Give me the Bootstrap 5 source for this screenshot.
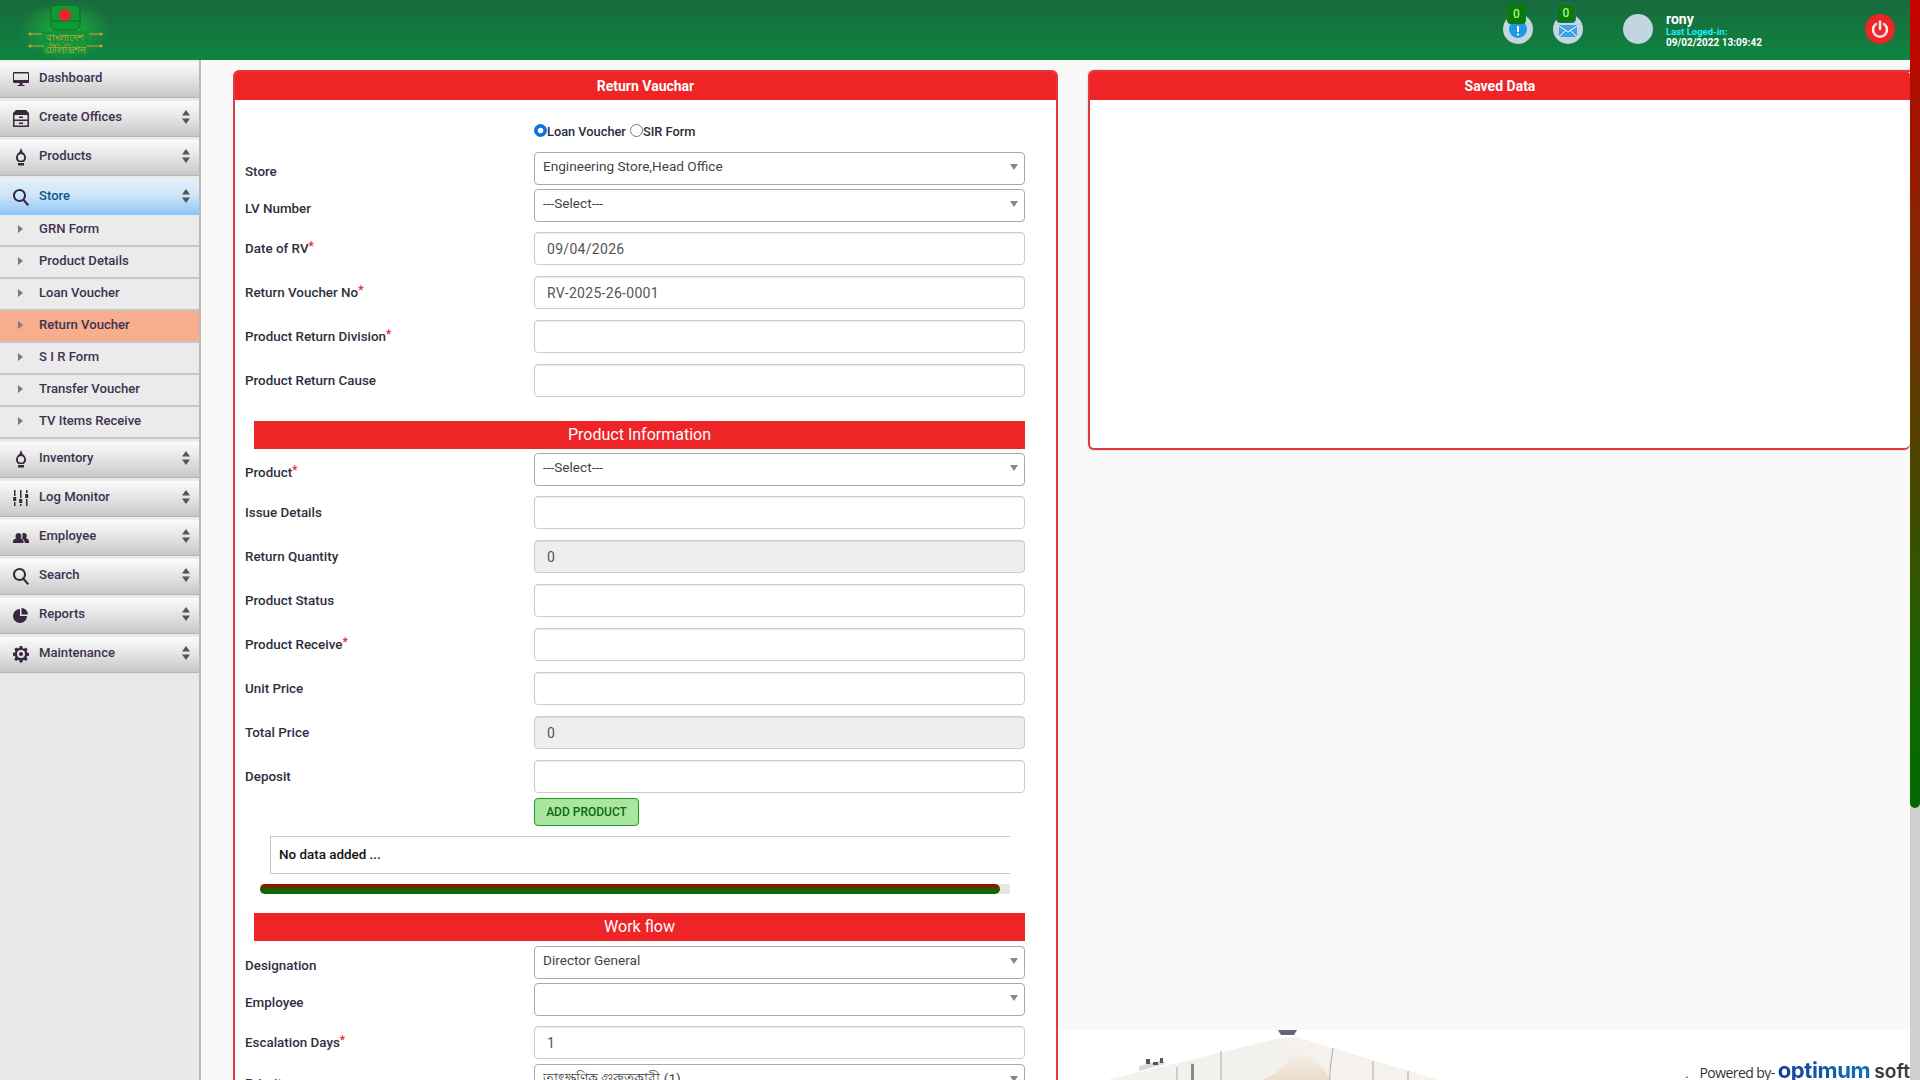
<!DOCTYPE html>
<html lang="en">
<head>
<meta charset="utf-8">
<title>Return Vauchar</title>
<link href="https://cdn.jsdelivr.net/npm/bootstrap@5.3.0/dist/css/bootstrap.min.css" rel="stylesheet">
<style>
html,body{height:100%;overflow:hidden}
body{font-family:Roboto,"Noto Sans",sans-serif;font-size:14px;color:#2d2d3a;background:#f9f9f9}
.app-shell{height:1080px;width:1920px}
.app-page{width:1910px;height:1080px;overflow:hidden}
.app-lower{min-height:0}
.fake-track{width:10px;height:1080px;background:#cfcfcf}
.fake-thumb{height:808px;border-radius:0 0 6px 6px;background:linear-gradient(#cc0000 0,#a31500 15%,#0b6a00 90%,#006a00 100%)}
.top-bar{height:60px;background:linear-gradient(#186a3c,#0f8440);color:#fff;flex:none}
.logo-zone{width:130px;height:60px}
.top-tools{margin-top:-3px}
.round-ic{width:30px;height:30px;border-radius:50%;background:#c2d6e0;position:relative}
.round-gap{margin-right:20px}
.round-face{margin-left:40px}
.bub{position:absolute;top:-10px;left:4px;width:19px;height:20px;background:#0b7a0b;color:#a5f08c;font-size:12px;font-weight:500;border-radius:4px;line-height:20px;text-align:center}
.bub-mail{left:3px;width:20px;top:-11px;border:1px solid #1f6a8a;line-height:18px}
.mail-ic{margin-top:5px}
.who{margin-left:13px;line-height:1;font-weight:700;width:199px}
.who-name{font-size:14px;line-height:14px;padding-top:2px;margin-bottom:1px;font-weight:700}
.who-last{font-size:9.5px;color:#19f0ff;line-height:9px}
.who-date{font-size:10px;line-height:11px;padding-top:1px}
.power{width:30px;height:30px;border-radius:50%;background:#ee2427;margin-right:15px}
.side-col{width:201px;background:#e9e9e9;border-right:2px solid #b9b9b9;flex:none;padding-top:1px}
.side-link{height:37px;margin-bottom:2px;padding:0 9px 3px 13px;color:#3c3350;background:linear-gradient(#fbfbfb,#e6e6e6 45%,#c8c8c8);border-top:1px solid #eee;border-bottom:1px solid #b5b5b5;font-size:13.1px;font-weight:500;text-decoration:none}
.side-link.is-open{background:linear-gradient(#e2effb,#cfe5f9 45%,#8cc4f5);color:#0f5a86;margin-bottom:0;border-bottom:0}
.side-ic{width:16px;height:18px;margin-right:10px;margin-top:2px;flex:none;fill:#39263f}
.updown{width:8px;height:14px;margin-left:auto;flex:none;fill:#555}
.sub-link{height:32px;padding:0 0 2px 18px;background:#ebebeb;border-bottom:2px solid #c6c6c6;color:#3c3350;font-size:13.1px;font-weight:500;text-decoration:none}
.sub-link.is-here{background:#f8ae8c;border-bottom-color:#c6c6c6}
.sub-arrow{width:5px;height:8px;margin-right:16px;fill:#7a7a7a;flex:none}
.side-sub-end{margin-bottom:2px}
.content-zone{padding-left:32px;min-width:0;overflow:hidden}
.form-side{width:825px;padding-top:10px;flex:none}
.red-card{border:2px solid #e0393e;border-radius:6px 6px 0 0}
.red-head{background:#ee2427;color:#fff;height:28px;line-height:29px;padding:0;text-align:center;font-weight:700;font-size:14px;border:0;border-radius:3px 3px 0 0!important}
.rv-body{padding:0 31px 40px 10px}
.rv-radio{margin-left:289px;height:52px;padding-top:22px;font-weight:500;font-size:12.8px}
.rv-radio .form-check-input{width:13px;height:13px;margin:0;border-color:#777;vertical-align:-1px;float:none;border-width:1px}
.rv-radio .form-check-input:checked{background-color:#0d74dc;border-color:#0d74dc}
.rv-radio label{margin-right:4px}
.rv-line{display:flex;margin-bottom:11px}
.rv-line.tight{margin-bottom:4px}
.rv-line.loose{margin-bottom:10px}
.rv-line.step{margin-bottom:5px}
.rv-name{width:289px;height:33px;flex:none;font-weight:500;font-size:13.4px;color:#2f2f3f;line-height:33px;margin:0}
.rv-name.low{padding-top:3px}
.rv-name i{color:#ee2427;font-style:normal;font-size:12px;vertical-align:3px;line-height:0}
.rv-field{height:33px;border:1px solid #ccc;border-radius:4px;padding:0 12px;font-size:14px;color:#555;letter-spacing:.3px;box-shadow:inset 0 1px 1px rgba(0,0,0,.08)}
.rv-field:disabled{background:#eee;opacity:1}
.rv-pick{height:33px;border:1px solid #a9a9a9;border-radius:4px;padding:0 24px 5px 8px;font-size:13.6px;color:#444;background-size:8px 6px;background-position:right 6px top 11px;background-image:url("data:image/svg+xml,%3Csvg xmlns='http://www.w3.org/2000/svg' viewBox='0 0 8 6'%3E%3Cpath fill='%23888' d='M0 0h8L4 6z'/%3E%3C/svg%3E");background-repeat:no-repeat;background-color:#fff;font-weight:400}
.rv-band{margin:0 0 4px 9px;height:28px;line-height:28px;background:#ee2427;color:#fff;text-align:center;font-size:16px;font-weight:400}
.rv-band.first{margin-top:24px}
.rv-band.later{margin-bottom:5px}
.rv-add{margin:-6px 0 10px 289px;height:28px;width:105px;padding:0;background:#a9e6a0;border:1px solid #1c9a1c;border-radius:4px;color:#0c6a0c;font-size:12px;font-weight:500;text-transform:uppercase;display:block}
.rv-empty{margin:0 15px 10px 25px;height:38px;line-height:36px;padding-left:8px;border:1px solid #c6c6c6;border-right:0;color:#111;font-weight:500;font-size:13.4px;background:#fff}
.rv-progress{margin:0 15px 19px 15px;height:10px;background:#e6e6e6;border-radius:0}
.rv-progress-fill{height:10px;width:740px;border-radius:5px;background:linear-gradient(#b00000,#0a6a00 65%)}
.right-side{padding-top:10px;padding-left:30px;min-width:0}
.saved-card{border:2px solid #e0393e;border-right:0;height:380px;border-radius:6px 0 6px 6px;box-shadow:0 0 2px rgba(220,50,50,.4)}
.foot-strip{height:50px;margin-left:-28px;background:#fff;position:relative;overflow:hidden}
.foot-art{position:absolute;left:0;top:0;width:850px;height:50px}
.foot-credit{position:relative;line-height:1;font-family:"Open Sans",sans-serif;color:#333;white-space:nowrap;margin-bottom:-1px}
.dot-text{font-size:12px;margin-right:11px}
.by-text{font-size:14px;letter-spacing:-.55px;margin-right:3px}
.op-text{font-family:Inter,sans-serif;font-size:22px;font-weight:700;letter-spacing:-.4px;background:linear-gradient(90deg,#1a3aa0,#0e72b8);-webkit-background-clip:text;background-clip:text;color:transparent}
.sf-text{font-family:Inter,sans-serif;font-size:19px;font-weight:600;color:#3a3a3a;margin-left:4px;letter-spacing:.1px}
</style>
</head>
<body>
<div class="app-shell d-flex">
 <div class="app-page d-flex flex-column">
  <header class="top-bar d-flex align-items-center">
   <div class="logo-zone">
    <svg width="130" height="60" viewBox="0 0 130 60">
     <defs><radialGradient id="glow"><stop offset="0" stop-color="#22b33a"/><stop offset="1" stop-color="#22b33a" stop-opacity="0"/></radialGradient></defs>
     <ellipse cx="65" cy="30" rx="46" ry="30" fill="url(#glow)"/>
     <rect x="51" y="5" width="29" height="25" rx="5" fill="#109a35" stroke="#0c6b2e"/>
     <path d="M51 21h29" stroke="#0c6b2e"/>
     <circle cx="65" cy="15" r="6" fill="#ee2427"/>
     <path d="M30 34h71M30 46h71" stroke="#c9a23a" stroke-width="1"/>
     <circle cx="30" cy="34" r="1.5" fill="#c9a23a"/><circle cx="101" cy="34" r="1.5" fill="#c9a23a"/><circle cx="30" cy="46" r="1.5" fill="#c9a23a"/><circle cx="101" cy="46" r="1.5" fill="#c9a23a"/>
     <rect x="42" y="31" width="47" height="11" fill="#12933a"/><rect x="44" y="43" width="43" height="11" fill="#14983a"/>
     <text x="65" y="41" text-anchor="middle" font-size="10" fill="#d3a83c" font-family="'Noto Sans',sans-serif">বাংলাদেশ</text>
     <text x="65" y="53" text-anchor="middle" font-size="10" fill="#d3a83c" font-family="'Noto Sans',sans-serif">টেলিভিশন</text>
    </svg>
   </div>
   <div class="ms-auto d-flex align-items-center top-tools">
    <div class="round-ic round-gap d-flex align-items-center justify-content-center">
     <span class="bub">0</span>
     <svg width="18" height="18" viewBox="0 0 18 18"><circle cx="9" cy="9" r="9" fill="#1f97e6"/><path d="M8 6h2v6H8zM8 13.500h2v2H8z" fill="#fff"/></svg>
    </div>
    <div class="round-ic d-flex align-items-center justify-content-center">
     <span class="bub bub-mail">0</span>
     <svg class="mail-ic" width="18" height="12" viewBox="0 0 18 12"><rect width="18" height="12" rx="1" fill="#3ea2e6"/><path d="M0 1l9 6 9-6M0 12l6-6M18 12l-6-6" fill="none" stroke="#fff" stroke-width="1"/></svg>
    </div>
    <div class="round-ic round-face"></div>
    <div class="who">
     <div class="who-name">rony</div>
     <div class="who-last">Last Loged-in:</div>
     <div class="who-date">09/02/2022 13:09:42</div>
    </div>
    <div class="power d-flex align-items-center justify-content-center">
     <svg width="20" height="20" viewBox="0 0 20 20" fill="none" stroke="#e9e4e4" stroke-width="2.6" stroke-linecap="round"><path d="M6 5a7 7 0 1 0 8 0"/><path d="M10 2.500v7.500"/></svg>
    </div>
   </div>
  </header>
  <div class="d-flex flex-grow-1 app-lower">
   <nav class="side-col nav flex-column flex-nowrap">
    <a class="side-link d-flex align-items-center" href="#"><svg class="side-ic" viewBox="0 0 16 18"><path d="M1 2h14a1 1 0 0 1 1 1v9a1 1 0 0 1-1 1H1a1 1 0 0 1-1-1V3a1 1 0 0 1 1-1zm0 1.500V10h14V3.500zM6.500 13h3v2h2v1h-7v-1h2z"/></svg>Dashboard</a>
    <a class="side-link d-flex align-items-center" href="#"><svg class="side-ic" viewBox="0 0 16 18"><path d="M3 1h10l3 3v14H0V4zM1.500 6v4.500h13V6zm0 6v4.500h13V12zM6 7.500h4V9H6zm0 6h4V15H6z" fill-rule="evenodd"/></svg>Create Offices<svg class="updown" viewBox="0 0 8 14"><path d="M4 0l4 5.500H0zM4 14l4-5.500H0z"/></svg></a>
    <a class="side-link d-flex align-items-center" href="#"><svg class="side-ic" viewBox="0 0 16 18"><path d="M8 0l1.600 4C12 5.500 13 8 13 10c0 1.800-1 3-2.500 4h-5C4 13 3 11.800 3 10c0-2 1-4.500 3.400-6zM8 6a3.500 3.500 0 0 0-3 4c0 1 .5 2 1.500 2.500h3C10.500 12 11 11 11 10a3.500 3.500 0 0 0-3-4zM5 15h6v2.500H5z" fill-rule="evenodd"/></svg>Products<svg class="updown" viewBox="0 0 8 14"><path d="M4 0l4 5.500H0zM4 14l4-5.500H0z"/></svg></a>
    <a class="side-link is-open d-flex align-items-center" href="#"><svg class="side-ic" viewBox="0 0 16 18"><path d="M6.500 1a6.500 6.500 0 0 1 5.100 10.500l4.400 5-1.500 1.400-4.400-5A6.500 6.500 0 1 1 6.500 1zm0 2a4.500 4.500 0 1 0 0 9 4.500 4.500 0 0 0 0-9z" fill-rule="evenodd"/></svg>Store<svg class="updown" viewBox="0 0 8 14"><path d="M4 0l4 5.500H0zM4 14l4-5.500H0z"/></svg></a>
    <a class="sub-link d-flex align-items-center" href="#"><svg class="sub-arrow" viewBox="0 0 5 8"><path d="M0 0l5 4-5 4z"/></svg>GRN Form</a>
    <a class="sub-link d-flex align-items-center" href="#"><svg class="sub-arrow" viewBox="0 0 5 8"><path d="M0 0l5 4-5 4z"/></svg>Product Details</a>
    <a class="sub-link d-flex align-items-center" href="#"><svg class="sub-arrow" viewBox="0 0 5 8"><path d="M0 0l5 4-5 4z"/></svg>Loan Voucher</a>
    <a class="sub-link is-here d-flex align-items-center" href="#"><svg class="sub-arrow" viewBox="0 0 5 8"><path d="M0 0l5 4-5 4z"/></svg>Return Voucher</a>
    <a class="sub-link d-flex align-items-center" href="#"><svg class="sub-arrow" viewBox="0 0 5 8"><path d="M0 0l5 4-5 4z"/></svg>S I R Form</a>
    <a class="sub-link d-flex align-items-center" href="#"><svg class="sub-arrow" viewBox="0 0 5 8"><path d="M0 0l5 4-5 4z"/></svg>Transfer Voucher</a>
    <a class="sub-link side-sub-end d-flex align-items-center" href="#"><svg class="sub-arrow" viewBox="0 0 5 8"><path d="M0 0l5 4-5 4z"/></svg>TV Items Receive</a>
    <a class="side-link d-flex align-items-center" href="#"><svg class="side-ic" viewBox="0 0 16 18"><path d="M8 0l1.600 4C12 5.500 13 8 13 10c0 1.800-1 3-2.500 4h-5C4 13 3 11.800 3 10c0-2 1-4.500 3.400-6zM8 6a3.500 3.500 0 0 0-3 4c0 1 .5 2 1.500 2.500h3C10.500 12 11 11 11 10a3.500 3.500 0 0 0-3-4zM5 15h6v2.500H5z" fill-rule="evenodd"/></svg>Inventory<svg class="updown" viewBox="0 0 8 14"><path d="M4 0l4 5.500H0zM4 14l4-5.500H0z"/></svg></a>
    <a class="side-link d-flex align-items-center" href="#"><svg class="side-ic" viewBox="0 0 16 18"><path d="M1 1h1.500v6H1zM.2 8h3v4h-3zM1 13h1.500v4H1zM7 1h1.500v8H7zM6.200 10h3v4h-3zM7 15h1.500v2H7zM13 1h1.500v3H13zM12.200 5h3v4h-3zM13 10h1.500v7H13z"/></svg>Log Monitor<svg class="updown" viewBox="0 0 8 14"><path d="M4 0l4 5.500H0zM4 14l4-5.500H0z"/></svg></a>
    <a class="side-link d-flex align-items-center" href="#"><svg class="side-ic" viewBox="0 0 16 18"><path d="M5.500 5a3 3 0 0 1 2 5.200c1.600.6 3 1.500 3 3.300V15H0v-1.500c0-1.800 1.500-2.700 3.400-3.300A3 3 0 0 1 5.500 5zM11 5a2.800 2.800 0 0 1 1.800 5c1.600.6 3.200 1.400 3.200 3.500V15h-4.200c0-2-1-3.500-2.800-4.700a4.200 4.200 0 0 0 .1-4.600A3 3 0 0 1 11 5z"/></svg>Employee<svg class="updown" viewBox="0 0 8 14"><path d="M4 0l4 5.500H0zM4 14l4-5.500H0z"/></svg></a>
    <a class="side-link d-flex align-items-center" href="#"><svg class="side-ic" viewBox="0 0 16 18"><path d="M6.500 1a6.500 6.500 0 0 1 5.100 10.500l4.400 5-1.500 1.400-4.400-5A6.500 6.500 0 1 1 6.500 1zm0 2a4.500 4.500 0 1 0 0 9 4.500 4.500 0 0 0 0-9z" fill-rule="evenodd"/></svg>Search<svg class="updown" viewBox="0 0 8 14"><path d="M4 0l4 5.500H0zM4 14l4-5.500H0z"/></svg></a>
    <a class="side-link d-flex align-items-center" href="#"><svg class="side-ic" viewBox="0 0 16 18"><path d="M7 3a7 7 0 1 0 7 7H7zM8.500 2v6.500H15A6.500 6.500 0 0 0 8.500 2z"/></svg>Reports<svg class="updown" viewBox="0 0 8 14"><path d="M4 0l4 5.500H0zM4 14l4-5.500H0z"/></svg></a>
    <a class="side-link d-flex align-items-center" href="#"><svg class="side-ic" viewBox="0 0 16 18"><path d="M6.700 1h2.600l.4 2.200 1.300.6 1.900-1.200 1.800 1.800-1.200 1.900.6 1.300 2.200.4v2.600l-2.200.4-.6 1.300 1.200 1.900-1.800 1.800-1.900-1.200-1.300.6-.4 2.100H6.700l-.4-2.100-1.300-.6-1.900 1.200-1.800-1.800 1.200-1.900-.6-1.300-2.200-.4V7.800l2.200-.4.600-1.300-1.200-1.900 1.800-1.800 1.900 1.200 1.300-.6zM8 5a4 4 0 1 0 0 8 4 4 0 0 0 0-8zm0 2a2 2 0 1 1 0 4 2 2 0 0 1 0-4z" fill-rule="evenodd"/></svg>Maintenance<svg class="updown" viewBox="0 0 8 14"><path d="M4 0l4 5.500H0zM4 14l4-5.500H0z"/></svg></a>
   </nav>
   <main class="content-zone d-flex flex-grow-1">
    <section class="form-side">
     <div class="card red-card">
      <div class="card-header red-head">Return Vauchar</div>
      <form class="rv-body">
       <div class="rv-radio"><input class="form-check-input" type="radio" name="vt" id="r1" checked><label for="r1">Loan Voucher</label><input class="form-check-input" type="radio" name="vt" id="r2"><label for="r2">SIR Form</label></div>
       <div class="rv-line tight"><label class="rv-name low">Store</label><select class="form-select rv-pick"><option>Engineering Store,Head Office</option></select></div>
       <div class="rv-line loose"><label class="rv-name low">LV Number</label><select class="form-select rv-pick"><option>---Select---</option></select></div>
       <div class="rv-line"><label class="rv-name">Date of RV<i>*</i></label><input class="form-control rv-field" value="09/04/2026"></div>
       <div class="rv-line"><label class="rv-name">Return Voucher No<i>*</i></label><input class="form-control rv-field" value="RV-2025-26-0001"></div>
       <div class="rv-line"><label class="rv-name">Product Return Division<i>*</i></label><input class="form-control rv-field"></div>
       <div class="rv-line"><label class="rv-name">Product Return Cause</label><input class="form-control rv-field"></div>
       <div class="rv-band first">Product Information</div>
       <div class="rv-line loose"><label class="rv-name low">Product<i>*</i></label><select class="form-select rv-pick"><option>---Select---</option></select></div>
       <div class="rv-line"><label class="rv-name">Issue Details</label><input class="form-control rv-field"></div>
       <div class="rv-line"><label class="rv-name">Return Quantity</label><input class="form-control rv-field" value="0" disabled></div>
       <div class="rv-line"><label class="rv-name">Product Status</label><input class="form-control rv-field"></div>
       <div class="rv-line"><label class="rv-name">Product Receive<i>*</i></label><input class="form-control rv-field"></div>
       <div class="rv-line"><label class="rv-name">Unit Price</label><input class="form-control rv-field"></div>
       <div class="rv-line"><label class="rv-name">Total Price</label><input class="form-control rv-field" value="0" disabled></div>
       <div class="rv-line"><label class="rv-name">Deposit</label><input class="form-control rv-field"></div>
       <button type="button" class="btn rv-add">Add Product</button>
       <div class="rv-empty">No data added ...</div>
       <div class="rv-progress"><div class="rv-progress-fill"></div></div>
       <div class="rv-band later">Work flow</div>
       <div class="rv-line tight"><label class="rv-name low">Designation</label><select class="form-select rv-pick"><option>Director General</option></select></div>
       <div class="rv-line loose"><label class="rv-name low">Employee</label><select class="form-select rv-pick"><option></option></select></div>
       <div class="rv-line step"><label class="rv-name">Escalation Days<i>*</i></label><input class="form-control rv-field" value="1"></div>
       <div class="rv-line"><label class="rv-name low">Priority</label><select class="form-select rv-pick"><option>তাৎক্ষণিক গুরুত্বকারী (1)</option></select></div>
      </form>
     </div>
    </section>
    <aside class="right-side d-flex flex-column flex-grow-1">
     <div class="card saved-card">
      <div class="card-header red-head">Saved Data</div>
      <div class="card-body"></div>
     </div>
     <div class="foot-strip mt-auto d-flex justify-content-end align-items-end">
      <svg class="foot-art" viewBox="1060 1030 850 50">
       <defs><linearGradient id="beige" x1="0" y1="0" x2="0" y2="1"><stop offset="0" stop-color="#f6f1ea"/><stop offset="1" stop-color="#ecdcca"/></linearGradient></defs>
       <path d="M1107 1080L1284 1037h12L1438 1080z" fill="#f3f1ee"/>
       <path d="M1288 1038h8c8 2 40 14 142 42H1330c-6-30-26-30-40-32c4-4 3-7-2-10z" fill="#f6f3ef"/>
       <path d="M1262 1080c16-6 28-18 30-28c14 3 30 8 38 28z" fill="url(#beige)"/>
       <path d="M1278 1030h19l-3 5h-13z" fill="#5f6672"/>
       <path d="M1139 1066l24-6 2 4-26 7z" fill="#d9d9d9"/>
       <path d="M1146 1059h4v5h-4zM1160 1058h3v5h-3zM1153 1062h5v3h-5z" fill="#4b5a66"/>
       <path d="M1177 1067v13M1192 1063v17M1221 1051v29M1333 1048c-1 10-4 22-3 32M1373 1061v19M1408 1071v9" stroke="#a9a9a9" stroke-width="1" fill="none"/>
       <path d="M1191 1064h3v16h-3z" fill="#8a8a8a"/>
      </svg>
      <div class="foot-credit"><span class="dot-text">.</span><span class="by-text">Powered by-</span><span class="op-text">optimum</span><span class="sf-text">soft</span></div>
     </div>
    </aside>
   </main>
  </div>
 </div>
 <div class="fake-track"><div class="fake-thumb"></div></div>
</div>
<script src="https://cdn.jsdelivr.net/npm/bootstrap@5.3.0/dist/js/bootstrap.bundle.min.js"></script>
</body>
</html>
